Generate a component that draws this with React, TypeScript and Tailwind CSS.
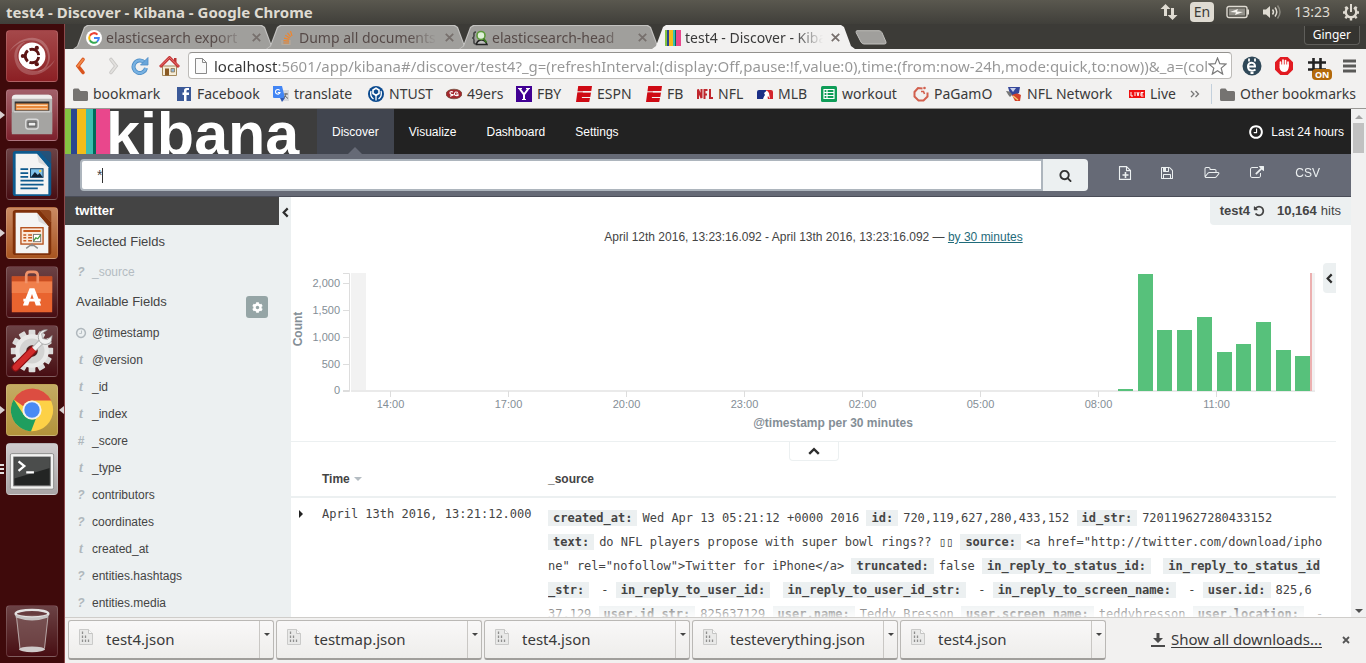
import React from "react";
import { FaCog } from "react-icons/fa";

const UI = "font-['Noto_Sans',sans-serif]";
const SANS = "font-['Liberation_Sans',sans-serif]";
const MONO = "font-['DejaVu_Sans_Mono',monospace]";

/* ---------- shared glyphs ---------- */

const PATHS = {
  search:
    "M1216 832q0-185-131.5-316.5t-316.5-131.5-316.5 131.5-131.5 316.5 131.5 316.5 316.5 131.5 316.5-131.5 131.5-316.5zm512 832q0 52-38 90t-90 38q-54 0-90-38l-343-342q-179 124-399 124-143 0-273.5-55.5t-225-150-150-225-55.5-273.5 55.5-273.5 150-225 225-150 273.5-55.5 273.5 55.5 225 150 150 225 55.5 273.5q0 220-124 399l343 343q37 37 37 90z",
  clock:
    "M1024 544v448q0 14-9 23t-23 9h-320q-14 0-23-9t-9-23v-64q0-14 9-23t23-9h224v-352q0-14 9-23t23-9h64q14 0 23 9t9 23zm416 352q0-148-73-273t-198-198-273-73-273 73-198 198-73 273 73 273 198 198 273 73 273-73 198-198 73-273zm224 0q0 209-103 385.5t-279.5 279.5-385.5 103-385.5-103-279.5-279.5-103-385.5 103-385.5 279.5-279.5 385.5-103 385.5 103 279.5 279.5 103 385.5z",
  undo: "M1664 896q0 156-61 298t-164 245-245 164-298 61q-172 0-327-72.5t-264-204.5q-7-10-6.5-22.5t8.5-20.5l137-138q10-9 25-9 16 2 23 12 73 95 179 147t225 52q104 0 198.5-40.5t163.5-109.5 109.5-163.5 40.5-198.5-40.5-198.5-109.5-163.5-163.5-109.5-198.5-40.5q-98 0-188 35.5t-160 101.5l137 138q31 30 14 69-17 40-59 40h-448q-26 0-45-19t-19-45v-448q0-42 40-59 39-17 69 14l130 129q107-101 244.5-156.5t284.5-55.5q156 0 298 61t245 164 164 245 61 298z",
  save: "M512 1536h768v-384h-768v384zm896 0h128v-896q0-14-10-38.5t-20-34.5l-281-281q-10-10-34-20t-39-10v416q0 40-28 68t-68 28h-576q-40 0-68-28t-28-68v-416h-128v1280h128v-416q0-40 28-68t68-28h832q40 0 68 28t28 68v416zm-384-928v-320q0-13-9.5-22.5t-22.5-9.5h-192q-13 0-22.5 9.5t-9.5 22.5v320q0 13 9.5 22.5t22.5 9.5h192q13 0 22.5-9.5t9.5-22.5zm640 32v928q0 40-28 68t-68 28h-1344q-40 0-68-28t-28-68v-1344q0-40 28-68t68-28h928q40 0 88 20t76 48l280 280q28 28 48 76t20 88z",
  folder:
    "M1845 931q0-35-53-35h-1088q-40 0-85.5 21.5t-71.5 52.5l-294 363q-18 24-18 40 0 35 53 35h1088q40 0 86-22t71-53l294-363q18-22 18-39zm-1141-163h768v-160q0-40-28-68t-68-28h-576q-40 0-68-28t-28-68v-64q0-40-28-68t-68-28h-320q-40 0-68 28t-28 68v853l256-315q44-53 116-87.5t140-34.5zm1269 163q0 62-46 120l-295 363q-43 53-116 87.5t-140 34.5h-1088q-92 0-158-66t-66-158v-960q0-92 66-158t158-66h320q92 0 158 66t66 158v32h544q92 0 158 66t66 158v160h192q54 0 99 24.5t67 70.5q15 32 15 68z",
  external:
    "M1408 928v320q0 119-84.5 203.5t-203.5 84.5h-832q-119 0-203.5-84.5t-84.5-203.5v-832q0-119 84.5-203.5t203.5-84.5h704q14 0 23 9t9 23v64q0 14-9 23t-23 9h-704q-66 0-113 47t-47 113v832q0 66 47 113t113 47h832q66 0 113-47t47-113v-320q0-14 9-23t23-9h64q14 0 23 9t9 23zm384-864v512q0 26-19 45t-45 19-45-19l-176-176-652 652q-10 10-23 10t-23-10l-114-114q-10-10-10-23t10-23l652-652-176-176q-19-19-19-45t19-45 45-19h512q26 0 45 19t19 45z",
};

function Glyph({ name, className = "w-3.5 h-3.5", box = "0 0 1792 1792" }: { name: keyof typeof PATHS; className?: string; box?: string }) {
  return (
    <svg viewBox={box} className={className} fill="currentColor" aria-hidden="true">
      <path d={PATHS[name]} />
    </svg>
  );
}

function Chevron({ className }: { className: string }) {
  return (
    <svg viewBox="0 0 12 12" className={className} fill="none" stroke="#2d2d2d" strokeWidth="2.4" aria-hidden="true">
      <path d="M8.4 1.5 4 6l4.4 4.5" />
    </svg>
  );
}

/* ---------- desktop panel ---------- */

function TopPanel() {
  return (
    <header className={`flex h-6 shrink-0 items-center justify-between bg-linear-to-b from-[#5a584f] to-[#403f3a] px-1.5 text-[#dfdbd2] ${UI}`}>
      <h1 className="text-[15px] leading-6 font-bold">test4 - Discover - Kibana - Google Chrome</h1>
      <div className="flex items-center gap-3">
        <svg viewBox="0 0 18 18" className="h-[18px] w-[18px]" fill="#dfdbd2">
          <path d="M5.500 1 10.500 6H7v7H4V6H.5zM12.500 17 7.500 12H11V5h3v7h3.500z" />
        </svg>
        <span className="rounded-sm bg-[#dfdbd2] px-1 text-sm leading-5 text-[#3c3b37]">En</span>
        <svg viewBox="0 0 24 14" className="h-3.5 w-6">
          <rect x="1" y="1.500" width="20" height="11" rx="2" fill="none" stroke="#dfdbd2" strokeWidth="1.400" />
          <rect x="3" y="3.500" width="16" height="7" fill="#918f88" />
          <path d="M22 4.500v5" stroke="#dfdbd2" strokeWidth="2" />
          <path d="m4 7 8-3-1 2.500 6 .5-8 3 1-2.500z" fill="#f5f3ee" />
        </svg>
        <svg viewBox="0 0 20 16" className="h-4 w-5" fill="none" stroke="#dfdbd2" strokeWidth="1.500">
          <path d="M1 5.500h3L8 2v12l-4-3.500H1z" fill="#dfdbd2" stroke="none" />
          <path d="M10.500 5.500q2 2.500 0 5M13 3.500q3.500 4.500 0 9" />
          <path d="M15.500 1.500q5 6.500 0 13" stroke="#8a887f" />
        </svg>
        <time className="text-sm">13:23</time>
        <svg viewBox="0 0 18 18" className="h-[18px] w-[18px]" fill="none" stroke="#dfdbd2">
          <path d="M6 4.600a5.300 5.300 0 1 0 6 0" strokeWidth="2.400" />
          <path d="M9 1v8" strokeWidth="2" />
          <path d="M1 9.500h2.500M14.500 9.500H17M3.300 3.800l1.800 1.800M14.700 3.800l-1.800 1.800M3.300 15.200l1.800-1.800M14.700 15.200l-1.800-1.800M9 15v2.500" strokeWidth="2.400" />
        </svg>
      </div>
    </header>
  );
}

/* ---------- launcher ---------- */

function Swirl() {
  return (
    <svg viewBox="0 0 52 52" className="h-full w-full">
      <path d="M2 22C14 2 40 2 44 22c3 12-5 20-12 20 14-4 14-22 2-30C26 8 14 8 2 22z" fill="#fff" opacity=".22" />
      <path d="M50 30C40 50 12 52 8 30 6 20 12 12 20 11 8 18 8 32 18 38c10 7 22 4 32-8z" fill="#fff" opacity=".2" />
      <circle cx="26" cy="26" r="14" fill="#fff" />
      <circle cx="26" cy="26" r="7" fill="none" stroke="#5c1414" strokeWidth="3" strokeDasharray="12.600 2" strokeDashoffset="-1" />
      <circle cx="16.500" cy="26" r="2.200" fill="#5c1414" />
      <circle cx="31" cy="17.600" r="2.200" fill="#5c1414" />
      <circle cx="31" cy="34.500" r="2.200" fill="#5c1414" />
    </svg>
  );
}

function Files() {
  return (
    <svg viewBox="0 0 52 52" className="h-full w-full">
      <path d="M5 9q0-4 4-4h34q4 0 4 4v35H5z" fill="#b9b8b6" />
      <path d="M5 9q0-4 4-4h34q4 0 4 4z" fill="#efeeed" />
      <path d="M8 12h36v10H8z" fill="#333" />
      <path d="M9 14h34v7H9z" fill="#e98a3c" />
      <path d="M10 16h32M10 19.500h32" stroke="#fbd9b4" strokeWidth="1.200" />
      <path d="M7 22h38l2 2v22H5V24z" fill="#a5a4a2" />
      <path d="M7 21.500h38v2H7z" fill="#cfcecd" />
      <rect x="19.500" y="30.500" width="13" height="10" rx="2.500" fill="#8d8c8b" stroke="#d9d9d9" strokeWidth="1.500" />
      <rect x="22" y="33.500" width="8" height="4" fill="#eee" stroke="#555" />
    </svg>
  );
}

function Doc({ tone, children }: { tone: string; children: React.ReactNode }) {
  return (
    <svg viewBox="0 0 52 52" className="h-full w-full">
      <path d="M6 5q0-3 3-3h25l12 13v31q0 3-3 3H9q-3 0-3-3z" fill={tone} />
      <path d="M34 2h9q3 0 3 3v10z" fill={tone} opacity=".75" />
      <path d="M9 5h22l12 14v28H9z" fill="#f4f4f3" />
      <path d="M31 5l12 14-10-5z" fill="#dcdcdc" />
      {children}
    </svg>
  );
}

function Bag() {
  return (
    <svg viewBox="0 0 52 52" className="h-full w-full">
      <path d="M5 10h42v37H5z" fill="#e9642f" />
      <path d="M5 10h42v5H5z" fill="#c94e22" />
      <path d="M5 15h42v12H5z" fill="#f07f4b" />
      <path d="M20 17V9q0-4 4-4h4q4 0 4 4v8" fill="none" stroke="#f0936a" strokeWidth="2.800" />
      <path d="M23.500 22h5l7 18h-5.500l-4-12-4 12h-5.500z" fill="#fff" />
      <path d="M17 33h18v3H17z" fill="#fff" />
    </svg>
  );
}

function Tools() {
  const teeth = [0, 30, 60, 90, 120, 150, 180, 210, 240, 270, 300, 330];
  return (
    <svg viewBox="0 0 52 52" className="h-full w-full">
      {teeth.map((a) => (
        <rect key={a} x="22.500" y="4" width="7" height="10" rx="1" fill="#dcdcdb" transform={`rotate(${a} 26 26)`} />
      ))}
      <circle cx="26" cy="26" r="17.500" fill="#e9e9e8" />
      <circle cx="26" cy="26" r="13" fill="#d3d3d2" />
      <circle cx="26" cy="26" r="6" fill="#4a2222" />
      <path d="M9 43 27 25" stroke="#8c0f12" strokeWidth="8.500" strokeLinecap="round" />
      <path d="M9 43 27 25" stroke="#d22b2b" strokeWidth="6" strokeLinecap="round" />
      <path d="m28 24 8-8" stroke="#b5b5b5" strokeWidth="6" />
      <path d="m28 24 8-8" stroke="#f1f1f0" strokeWidth="4" />
      <path d="M42 4c-6-1-11 4-9 10 2 6 9 7 13 2l1-6-5 4-5-1-1-5z" fill="#f1f1f0" stroke="#999" strokeWidth=".8" />
    </svg>
  );
}

function ChromeIcon() {
  return (
    <svg viewBox="0 0 52 52" className="h-full w-full">
      <circle cx="26" cy="26" r="22" fill="#fdd147" />
      <path d="M7 15A22 22 0 0 1 46 16H26a10 10 0 0 0-9 6z" fill="#dc4d41" />
      <path d="M7 15 17.300 31A10 10 0 0 0 30 35l-5 13A22 22 0 0 1 7 15z" fill="#1f9e5f" />
      <circle cx="26" cy="26" r="10" fill="#f4f3ee" />
      <circle cx="26" cy="26" r="8" fill="#4a8af4" />
    </svg>
  );
}

function TerminalIcon() {
  return (
    <svg viewBox="0 0 52 52" className="h-full w-full">
      <rect x="3.500" y="10" width="45" height="37" rx="1.500" fill="#f2f2f1" stroke="#8c8c8b" />
      <rect x="7" y="13.500" width="38" height="30" fill="#232524" stroke="#777" />
      <path d="M7.500 14h37v11L7.500 36z" fill="#4b4d4c" />
      <path d="m12 18 6 5-6 5" fill="none" stroke="#fff" strokeWidth="2.400" />
      <path d="M20 29.500h8" stroke="#fff" strokeWidth="2.200" />
    </svg>
  );
}

function Trash() {
  return (
    <svg viewBox="0 0 52 52" className="h-full w-full">
      <path d="m9 9 4 36q12 5 26 0l4-36z" fill="#8a6a6a" opacity=".5" />
      <path d="m10 12 3.500 32M42.500 12 39 44" stroke="#b9a9a9" fill="none" />
      <ellipse cx="26" cy="45" rx="13.500" ry="3" fill="#cfcaca" />
      <ellipse cx="26" cy="8" rx="17" ry="4" fill="none" stroke="#e4e2e2" strokeWidth="2.500" />
      <path d="M9 9q17 6 34 0v3q-17 6-34 0z" fill="#c6c2c2" />
    </svg>
  );
}

const LAUNCHERS: { label: string; bg: string; art: React.ReactNode; mark?: "one" | "many" | "active" }[] = [
  { label: "Dash home", bg: "bg-linear-to-b from-[#a5484a] to-[#8c1f24]", art: <Swirl /> },
  { label: "Files", bg: "bg-linear-to-b from-[#a2606a] to-[#7c1f2c]", art: <Files />, mark: "one" },
  {
    label: "Writer",
    bg: "bg-linear-to-b from-[#6b4245] to-[#480d13]",
    art: (
      <Doc tone="#0d5a8e">
        <path d="M14 21h8M14 25h8M14 29h8M14 33h24M14 37h24M14 41h18" stroke="#0d5a8e" strokeWidth="1.800" />
        <rect x="24.500" y="20.500" width="13" height="9" fill="#7fc1e8" stroke="#0d3d60" />
        <path d="m25 29 4-5 3 3 2-2 3 4z" fill="#123" />
        <circle cx="34.500" cy="23" r="1.300" fill="#f8d24a" />
      </Doc>
    ),
  },
  {
    label: "Impress",
    bg: "bg-linear-to-b from-[#c98a62] to-[#a8541f]",
    mark: "one",
    art: (
      <Doc tone="#80310a">
        <rect x="14.500" y="20.500" width="23" height="17" fill="#fbe9da" stroke="#b5501b" strokeWidth="1.400" />
        <path d="M17 24h18" stroke="#c55a1e" strokeWidth="2" />
        <path d="M17 28h3M17 31h3M17 34h3M22 28h4M22 31h4M22 34h4" stroke="#c55a1e" strokeWidth="1.600" />
        <rect x="27.500" y="27.500" width="7.500" height="7.500" fill="#fff" stroke="#777" />
        <path d="m28 34 2-3 2 1 3-4" fill="none" stroke="#3a9a3a" strokeWidth="1.300" />
        <path d="m20 42 4-3h4l4 3M26 37v2" fill="none" stroke="#888" strokeWidth="1.500" />
      </Doc>
    ),
  },
  { label: "Software Center", bg: "bg-linear-to-b from-[#6b4245] to-[#480d13]", art: <Bag /> },
  { label: "System Settings", bg: "bg-linear-to-b from-[#6b4245] to-[#480d13]", art: <Tools /> },
  { label: "Google Chrome", bg: "bg-linear-to-b from-[#c4ab63] to-[#b3933a]", art: <ChromeIcon />, mark: "active" },
  { label: "Terminal", bg: "bg-linear-to-b from-[#cfcccd] to-[#a9a5a6]", art: <TerminalIcon />, mark: "many" },
];

function Tile({ label, bg, art, mark }: { label: string; bg: string; art: React.ReactNode; mark?: string }) {
  return (
    <button type="button" aria-label={label} className="relative flex h-[52px] w-full shrink-0 items-center pl-1.5">
      <span className={`h-[52px] w-[52px] overflow-hidden rounded-[4px] border border-white/15 ${bg}`}>{art}</span>
      {(mark === "one" || mark === "active") && (
        <svg viewBox="0 0 5 8" className="absolute left-0 h-2 w-[5px]">
          <path d="M0 0 5 4 0 8z" fill="#d8d0d0" />
        </svg>
      )}
      {mark === "active" && (
        <svg viewBox="0 0 5 8" className="absolute right-0 h-2 w-[5px]">
          <path d="M5 0 0 4l5 4z" fill="#d8d0d0" />
        </svg>
      )}
      {mark === "many" && (
        <svg viewBox="0 0 5 12" className="absolute left-0 h-3 w-[5px]">
          <path d="M0 2h4M0 6h4M0 10h4" stroke="#e4dede" strokeWidth="2" />
        </svg>
      )}
    </button>
  );
}

function Launcher() {
  return (
    <nav aria-label="Launcher" className="flex w-[65px] shrink-0 flex-col justify-between border-r border-[#8d4a4c] bg-[#3f0a0b] pt-1.5 pb-1.5">
      <div className="flex flex-col gap-[7px]">
        {LAUNCHERS.map((l) => (
          <Tile key={l.label} {...l} />
        ))}
      </div>
      <Tile label="Trash" bg="bg-linear-to-b from-[#6b4245] to-[#480d13]" art={<Trash />} />
    </nav>
  );
}

/* ---------- browser chrome ---------- */

const SHAPE = "[clip-path:polygon(0_100%,4px_88%,11px_8%,14px_0,calc(100%-14px)_0,calc(100%-11px)_8%,calc(100%-4px)_88%,100%_100%)]";

function GoogleG() {
  return (
    <svg viewBox="0 0 16 16" className="h-4 w-4">
      <circle cx="8" cy="8" r="8" fill="#fff" />
      <path d="M11.500 4.600A4.800 4.800 0 0 0 3.800 5.700" fill="none" stroke="#ea4335" strokeWidth="2" />
      <path d="M3.800 5.700a4.800 4.800 0 0 0 0 4.600" fill="none" stroke="#fbbc05" strokeWidth="2" />
      <path d="M3.800 10.300a4.800 4.800 0 0 0 7.200 1.400" fill="none" stroke="#34a853" strokeWidth="2" />
      <path d="M11 11.700A4.800 4.800 0 0 0 12.800 8H8" fill="none" stroke="#4285f4" strokeWidth="2" />
    </svg>
  );
}

function StackIcon() {
  return (
    <svg viewBox="0 0 16 16" className="h-4 w-4" stroke="#f0852c" strokeWidth="1.200" fill="none">
      <path d="M3 10v4.500h8V10" stroke="#b5aa9c" />
      <path d="M4.500 13h5.500M4.500 10.600l5.500.5M5 8.100l5.200 1.300M6.300 5.300l4.500 2.600M8.500 2.800l3.200 4M11.500 1.200l1.500 5" />
    </svg>
  );
}

function HeadIcon() {
  return (
    <svg viewBox="0 0 16 16" className="h-4 w-4" fill="none">
      <path d="M4 2Q1.500 2 2 5 2.200 7.500.8 8 2.200 8.500 2 11q-.5 3 2 3" stroke="#444" strokeWidth="1.600" />
      <path d="M4.500 14.500Q5 10.500 9 10t6 4.500z" fill="#bdbdbd" stroke="#222" strokeWidth="1.500" />
      <circle cx="9" cy="5.500" r="4" fill="#dff0d8" stroke="#5c9a3a" strokeWidth="1.600" />
      <path d="m11.500 8.500 3 4" stroke="#3f7a24" strokeWidth="1.800" />
    </svg>
  );
}

function Stripes() {
  return (
    <svg viewBox="0 0 16 16" className="h-4 w-4">
      <path d="M0 0h2v16H0z" fill="#85c441" />
      <path d="M2 0h2v16H2z" fill="#2b4590" />
      <path d="M4 0h4v16H4z" fill="#f3bd19" />
      <path d="M8 0h2v16H8z" fill="#3cbeb1" />
      <path d="M10 0h1v16h-1z" fill="#006a5a" />
      <path d="M11 0h5v16h-5z" fill="#e9478c" />
    </svg>
  );
}

const TABS = [
  { title: "elasticsearch export", icon: <GoogleG /> },
  { title: "Dump all documents", icon: <StackIcon /> },
  { title: "elasticsearch-head", icon: <HeadIcon /> },
  { title: "test4 - Discover - Kibana", icon: <Stripes />, active: true },
];

function TabStrip() {
  return (
    <div className="flex h-[25px] shrink-0 items-end justify-between bg-[#3c3b37] pl-2">
      <div className="flex min-w-0 items-end" role="tablist">
        {TABS.map((t) => (
          <div key={t.title} className={`relative -mr-2.5 h-6 w-[203px] ${t.active ? "z-10" : ""}`}>
            <div className={`h-full px-px pt-px ${SHAPE} ${t.active ? "bg-[#f2f1f0]" : "bg-[#c3c2c0]"}`}>
              <div className={`flex h-full items-center pr-3.5 pl-3 ${SHAPE} ${t.active ? "bg-[#f2f1f0] text-[#3a3a3a]" : "bg-[#a09f9c] text-[#564a48]"}`}>
                <button type="button" role="tab" aria-selected={!!t.active} className="flex min-w-0 flex-1 items-center gap-1">
                  {t.icon}
                  <span className="min-w-0 flex-1 overflow-hidden text-left text-sm leading-5 whitespace-nowrap [mask-image:linear-gradient(to_right,#000_calc(100%-28px),transparent)]">{t.title}</span>
                </button>
                <button type="button" aria-label={`Close ${t.title}`} className="ml-2">
                  <svg viewBox="0 0 9 9" className="h-[9px] w-[9px]" stroke="#77706d" strokeWidth="1.800">
                    <path d="m.8.8 7.400 7.400M8.200.8.800 8.200" />
                  </svg>
                </button>
              </div>
            </div>
          </div>
        ))}
        <button type="button" aria-label="New tab" className="mb-1 ml-2.5">
          <svg viewBox="0 0 32 15" className="block h-[15px] w-8">
            <path d="M2 .7h22q2 0 3 2l4 9.300q.5 2-1.500 2H9q-2 0-3-2L1.200 2.700Q.7.7 2 .7z" fill="#a09f9c" stroke="#c0bfbc" />
          </svg>
        </button>
      </div>
      <button type="button" className="mr-1.5 mb-1 h-[19px] rounded-b border border-t-0 border-[#5f5e5a] bg-[#353430] px-2 text-xs text-white">Ginger</button>
    </div>
  );
}

function Toolbar() {
  return (
    <div className="flex h-[33px] shrink-0 items-center gap-2.5 bg-[#f2f1f0] pr-2.5 pl-2">
      <button type="button" aria-label="Back">
        <svg viewBox="0 0 14 20" className="h-5 w-3.5" fill="none">
          <path d="M10 3.500 5 10l5 6.500" stroke="#d9541e" strokeWidth="3.600" strokeLinecap="round" />
          <path d="M10 3.500 5 10" stroke="#f08a4a" strokeWidth="2" strokeLinecap="round" />
        </svg>
      </button>
      <button type="button" aria-label="Forward" className="ml-2.5">
        <svg viewBox="0 0 14 20" className="h-5 w-3.5" fill="none">
          <path d="M4 3.500 9 10l-5 6.500" stroke="#c9c7c5" strokeWidth="3.600" strokeLinecap="round" />
          <path d="M4 3.500 9 10l-5 6.500" stroke="#e2e0de" strokeWidth="1.800" strokeLinecap="round" />
        </svg>
      </button>
      <button type="button" aria-label="Reload">
        <svg viewBox="0 0 18 18" className="h-[18px] w-[18px]" fill="none">
          <path d="M13.500 5.500A6.300 6.300 0 1 0 15 11" stroke="#4f8ec6" strokeWidth="4" />
          <path d="M13.500 5.500A6.300 6.300 0 1 0 15 11" stroke="#79b2e2" strokeWidth="2.200" />
          <path d="M9.500 8H17V.500z" fill="#6aa6da" stroke="#4f8ec6" strokeWidth=".8" />
        </svg>
      </button>
      <button type="button" aria-label="Home">
        <svg viewBox="0 0 21 20" className="h-5 w-[21px]">
          <path d="M3.500 10h14v9.500h-14z" fill="#f4ecd8" stroke="#a58a5c" />
          <path d="M6 12.500h4v7H6z" fill="#8a5a24" />
          <path d="M12 12.500h3.500V16H12z" fill="#8fb6d8" stroke="#8a6a3a" strokeWidth=".7" />
          <path d="M15 2h2.500v5H15z" fill="#b33" />
          <path d="m1 11 9.500-9.500L20 11" fill="none" stroke="#c23434" strokeWidth="3" strokeLinejoin="round" />
          <path d="m1.500 10 9-8.500 9 8.500" fill="none" stroke="#e77" strokeWidth=".9" />
        </svg>
      </button>
      <div className="-ml-0.5 flex h-[27px] min-w-0 flex-1 items-center rounded-sm border border-[#bdbbb8] border-t-[#93918e] bg-white pr-1 pl-1.5">
        <svg viewBox="0 0 12 16" className="mr-[7px] h-4 w-3 shrink-0">
          <path d="M.5.5h7l4 4v11H.500z" fill="#fafafa" stroke="#8a8a8a" />
          <path d="M7.500.5v4h4" fill="none" stroke="#8a8a8a" />
        </svg>
        <input
          aria-label="Address"
          className="min-w-0 flex-1 bg-[linear-gradient(to_right,#333_63px,#969696_63px)] bg-clip-text text-[15px] leading-6 text-transparent outline-none"
          defaultValue="localhost:5601/app/kibana#/discover/test4?_g=(refreshInterval:(display:Off,pause:!f,value:0),time:(from:now-24h,mode:quick,to:now))&_a=(columns:!(_source))"
        />
        <button type="button" aria-label="Bookmark this page">
          <svg viewBox="0 0 19 18" className="h-[18px] w-[19px]" fill="#fff" stroke="#7a7a7a" strokeWidth="1.200">
            <path d="m9.500 1 2.300 5.700 6.100.4-4.700 4 1.500 6-5.200-3.300-5.200 3.300 1.500-6-4.700-4 6.100-.4z" />
          </svg>
        </button>
      </div>
      <div className="flex items-center gap-[13px]">
        <button type="button" aria-label="Evernote clipper">
          <svg viewBox="0 0 20 20" className="h-5 w-5">
            <circle cx="10" cy="10" r="9.500" fill="#2f4858" />
            <path d="M6.500 10.500H13A3.500 3.500 0 0 0 6 10q-.2 4.500 4 4.700 2 0 3.500-1.200" fill="none" stroke="#fff" strokeWidth="2" />
            <path d="M7 2.500v3M13 2.500v3M8.500 17h3" stroke="#fff" strokeWidth="1.800" />
          </svg>
        </button>
        <button type="button" aria-label="AdBlock">
          <svg viewBox="0 0 18 18" className="h-[18px] w-[18px]">
            <path d="M5.300 0h7.400L18 5.300v7.400L12.700 18H5.300L0 12.700V5.300z" fill="#e21b22" />
            <path d="M5.500 8V5M8 8V3M10.500 8V3.500M13 9V5" stroke="#fff" strokeWidth="1.700" strokeLinecap="round" />
            <path d="M4.700 7.500h9.100q.3 7.500-4.300 7.500-4.300 0-5-4.500z" fill="#fff" />
          </svg>
        </button>
        <button type="button" aria-label="Grid extension" className="relative flex h-6 w-6 items-start pt-1 pl-0.5">
          <svg viewBox="0 0 18 16" className="h-4 w-[18px]" stroke="#222" strokeWidth="2.600">
            <path d="M5.500 0v16M12.500 0v16M0 4.500h18M0 11.500h18" />
          </svg>
          <span className="absolute top-[15px] left-1.5 rounded-sm bg-[#b3690b] px-[3px] text-[9px] leading-[11px] font-bold text-white">ON</span>
        </button>
        <button type="button" aria-label="Menu">
          <svg viewBox="0 0 13 14" className="h-3.5 w-[13px]" stroke="#5a5a58" strokeWidth="2.800">
            <path d="M0 2h13M0 7h13M0 12h13" />
          </svg>
        </button>
      </div>
    </div>
  );
}

const folderIcon = (
  <svg viewBox="0 0 15 13" className="h-[13px] w-[15px]" fill="#757371">
    <path d="M0 2Q0 .5 1.500.5h4L7.500 3h6Q15 3 15 4.500v7q0 1.500-1.500 1.500h-12Q0 13 0 11.500z" />
  </svg>
);

function Icon16({ children }: { children: React.ReactNode }) {
  return (
    <svg viewBox="0 0 16 16" className="h-4 w-4">
      {children}
    </svg>
  );
}

const espn = (
  <Icon16>
    <path d="M2.200 0H16l-.7 5H7l-.2 1.500h8.200L14.300 11H6l-.2 1h8.200L13.200 16H0z" fill="#cf0a14" />
    <path d="M1 5.800h15" stroke="#f2f1f0" strokeWidth="1" />
  </Icon16>
);

const BOOKMARKS: { label: string; width: string; icon: React.ReactNode }[] = [
  { label: "bookmark", width: "w-[103px]", icon: folderIcon },
  {
    label: "Facebook",
    width: "w-[97px]",
    icon: (
      <Icon16>
        <path d="M1 1h14v14H1z" fill="#3b5998" />
        <path d="M10.500 15V9H13V6.500h-2.500V5q0-1 1-1H13V2h-2.500Q8 2 8 4.500v2H6.500V9H8v6z" fill="#fff" />
      </Icon16>
    ),
  },
  {
    label: "translate",
    width: "w-[95px]",
    icon: (
      <Icon16>
        <path d="M6 4h10v11H9z" fill="#d8dade" />
        <path d="M0 0h9l3 12H1Q0 12 0 11z" fill="#4285f4" />
        <path d="m7 12 5 0-3 4z" fill="#3058b0" />
        <path d="M6.700 4.500A2.300 2.300 0 1 0 7 6.500H4.800" fill="none" stroke="#fff" strokeWidth="1.100" />
        <path d="M11 8h4M13 7v1l-2 4M12 10l3 2.500" stroke="#666" fill="none" />
      </Icon16>
    ),
  },
  {
    label: "NTUST",
    width: "w-[78px]",
    icon: (
      <Icon16>
        <circle cx="8" cy="8" r="8" fill="#0b4a8f" />
        <path d="M8 2.200 11 4v3.500L8 9.300 5 7.500V4z" fill="none" stroke="#fff" strokeWidth="1.600" />
        <path d="M8 9v5.500M3 5q-1.500 5 2.500 8M13 5q1.500 5-2.500 8" fill="none" stroke="#fff" strokeWidth="1.300" />
      </Icon16>
    ),
  },
  {
    label: "49ers",
    width: "w-[70px]",
    icon: (
      <Icon16>
        <ellipse cx="8" cy="8" rx="8" ry="4.800" fill="#a3262c" stroke="#6b4a3a" strokeWidth=".7" />
        <path d="M7 6q-3-1-3 .7T6.500 8.500 4 10.200M12 6.500q-3-1.500-3.500 1t3.500 2V8h-2" fill="none" stroke="#fff" strokeWidth="1.100" />
      </Icon16>
    ),
  },
  {
    label: "FBY",
    width: "w-[60px]",
    icon: (
      <Icon16>
        <path d="M0 0h16v16H0z" fill="#410093" />
        <path d="m3.500 2.500 4.500 6 4.500-6M8 8v5.500" fill="none" stroke="#fff" strokeWidth="2" />
        <path d="M2 2.500h4M10 2.500h4M6 13.500h4" stroke="#fff" strokeWidth="1" />
      </Icon16>
    ),
  },
  { label: "ESPN", width: "w-[70px]", icon: espn },
  { label: "FB", width: "w-[51px]", icon: espn },
  {
    label: "NFL",
    width: "w-[60px]",
    icon: (
      <Icon16>
        <path d="M1 13V3.500L4.500 12V3M7.500 13V4h3M7.500 8.500H10M13 3v9h3" fill="none" stroke="#c0272d" strokeWidth="2" />
      </Icon16>
    ),
  },
  {
    label: "MLB",
    width: "w-[64px]",
    icon: (
      <Icon16>
        <path d="M2 4h7v9H0V6q0-2 2-2z" fill="#1b2f86" />
        <path d="M9 4h5q2 0 2 2v7h-5z" fill="#d2242c" />
        <path d="M6 13q1-3 2-4l-1-2 3-2.500L12 7l1 6-2-3-2 3z" fill="#fff" />
      </Icon16>
    ),
  },
  {
    label: "workout",
    width: "w-[92px]",
    icon: (
      <Icon16>
        <rect width="16" height="16" rx="1.500" fill="#0f9d58" />
        <path d="M3 3.500h10v9H3zM3 6.500h10M3 9.500h10M6 3.500v9" fill="none" stroke="#fff" strokeWidth="1.200" />
      </Icon16>
    ),
  },
  {
    label: "PaGamO",
    width: "w-[93px]",
    icon: (
      <Icon16>
        <path d="M9.500 2.500 5 2 1.500 6v4.500l4 4h5l4-4V6.500" fill="none" stroke="#d2604e" strokeWidth="2" />
        <circle cx="11.500" cy="2" r="1.300" fill="#d2604e" />
        <path d="M8 5.500h2.500l1 2.500" fill="none" stroke="#d2604e" strokeWidth="1.600" />
      </Icon16>
    ),
  },
  {
    label: "NFL Network",
    width: "w-[123px]",
    icon: (
      <Icon16>
        <path d="M2 1h12l-1 6-5 3-4-2z" fill="#36479a" />
        <path d="M4 2h6l-3 4z" fill="#c9d1ea" />
        <path d="M0 5q5 0 6 4l-2 2Q2 9 0 5z" fill="#777" />
        <path d="M6 9q5-3 9 0l-1 6H9z" fill="#d3422b" />
        <path d="m7 10 5 4" stroke="#f6c66a" strokeWidth="1.400" />
      </Icon16>
    ),
  },
  {
    label: "Live",
    width: "w-[61px]",
    icon: (
      <Icon16>
        <path d="M0 4h16v8H0z" fill="#f01010" />
        <path d="M2 6v4h2M6 6v4M8 6l1 4 1-4M14.500 6.500H12V10h2.500M12 8h2" fill="none" stroke="#fff" strokeWidth="1" />
      </Icon16>
    ),
  },
];

function BookmarkBar() {
  return (
    <div className="flex h-[27px] shrink-0 items-center border-b border-[#9a9895] bg-[#f2f1f0] pb-0.5 pl-2 text-sm text-[#3a3a3a]">
      <ul className="flex min-w-0 flex-1 items-center overflow-hidden">
        {BOOKMARKS.map((b) => (
          <li key={b.label} className={`shrink-0 ${b.width}`}>
            <a href="#" className="flex items-center gap-[5px] whitespace-nowrap">
              {b.icon}
              {b.label}
            </a>
          </li>
        ))}
        <li>
          <button type="button" aria-label="More bookmarks" className="flex">
            <svg viewBox="0 0 10 8" className="h-2 w-2.5" fill="none" stroke="#777" strokeWidth="1.300">
              <path d="m1 1 3 3-3 3M5.500 1l3 3-3 3" />
            </svg>
          </button>
        </li>
      </ul>
      <a href="#" className="flex items-center gap-[5px] border-l border-[#c3d0dc] pr-2.5 pl-2 whitespace-nowrap">
        {folderIcon}
        Other bookmarks
      </a>
    </div>
  );
}

/* ---------- kibana ---------- */

function KibanaNav() {
  return (
    <nav className="flex h-[45px] items-stretch justify-between bg-[#222] text-xs text-white">
      <div className="flex items-stretch">
        <a href="#" className="flex w-[252px] items-stretch overflow-hidden bg-[#3d3d3d]">
          <span className="w-1.5 bg-[#85c441]" />
          <span className="w-1.5 bg-[#2b4590]" />
          <span className="w-[9px] bg-[#f3bd19]" />
          <span className="w-[7px] bg-[#3cbeb1]" />
          <span className="w-[3px] bg-[#006a5a]" />
          <span className="w-3.5 bg-[#e9478c]" />
          <span className="-ml-1 h-[45px] flex-1 text-[61px] leading-[50px] font-bold">kibana</span>
        </a>
        <a href="#" className="relative flex items-center bg-[#41454f] px-[15px]">
          Discover
          <svg viewBox="0 0 14 7" className="absolute bottom-0 left-1/2 -ml-[7px] h-[7px] w-3.5">
            <path d="m0 7 7-7 7 7z" fill="#666a76" />
          </svg>
        </a>
        <a href="#" className="flex items-center px-[15px]">Visualize</a>
        <a href="#" className="flex items-center px-[15px]">Dashboard</a>
        <a href="#" className="flex items-center px-[15px]">Settings</a>
      </div>
      <button type="button" className="flex items-center gap-[7px] pr-[7px]">
        <Glyph name="clock" className="h-4 w-4" />
        Last 24 hours
      </button>
    </nav>
  );
}

function SearchBar() {
  return (
    <form className="flex h-[43px] items-center border-b border-[#4a4d58] bg-[#666a76] py-1 pr-[31px] pl-[15px]" onSubmit={(e) => e.preventDefault()}>
      <div className="flex h-8 min-w-0 flex-1">
        <input
          aria-label="Query"
          defaultValue="*"
          autoFocus
          className="min-w-0 flex-1 rounded-l border-2 border-[#adb5bd] bg-white bg-[linear-gradient(#333,#333)] bg-[length:1px_15px] bg-[position:20px_center] bg-no-repeat px-[15px] text-sm text-[#444] caret-transparent outline-none"
        />
        <button type="submit" aria-label="Search" className="flex w-[45px] items-center justify-center rounded-r bg-[#ecf0f1] text-[#333]">
          <Glyph name="search" className="h-[13px] w-[13px]" />
        </button>
      </div>
      <div className="flex items-center pb-1 text-[#ecf0f1]">
        <button type="button" aria-label="New search" className="ml-[30px]">
          <svg viewBox="0 0 14 14" className="h-3.5 w-3.5" fill="none" stroke="currentColor" strokeWidth="1.100">
            <path d="M1.500.6h7l4 4v8.800h-11zM8.500.6v4h4" />
            <path d="M7.500 6v6M4.500 9h6" strokeWidth="1.600" />
          </svg>
        </button>
        <button type="button" aria-label="Save search" className="ml-7">
          <Glyph name="save" />
        </button>
        <button type="button" aria-label="Load saved search" className="ml-[30px]">
          <Glyph name="folder" className="h-3.5 w-4" box="0 0 2048 1792" />
        </button>
        <button type="button" aria-label="Share" className="ml-[30px]">
          <Glyph name="external" />
        </button>
        <button type="button" className="ml-[31px] text-xs">CSV</button>
      </div>
    </form>
  );
}

const FIELDS: [string, string][] = [
  ["clock", "@timestamp"],
  ["t", "@version"],
  ["t", "_id"],
  ["t", "_index"],
  ["#", "_score"],
  ["t", "_type"],
  ["?", "contributors"],
  ["?", "coordinates"],
  ["t", "created_at"],
  ["?", "entities.hashtags"],
  ["?", "entities.media"],
];

function Field({ kind, name, muted }: { kind: string; name: string; muted?: boolean }) {
  return (
    <li className={`flex h-[27px] items-center gap-1.5 text-xs ${muted ? "text-[#b4bcc2]" : "text-[#444]"}`}>
      <span className="flex w-2.5 items-center justify-center font-bold text-[#b0b8bd]">
        {kind === "clock" ? <Glyph name="clock" className="h-3 w-3 shrink-0" /> : <span className={kind === "t" ? "font-['Liberation_Serif',serif] text-sm italic" : kind === "?" ? "italic" : ""}>{kind}</span>}
      </span>
      {name}
    </li>
  );
}

function Sidebar() {
  return (
    <aside className="flex w-[226px] shrink-0 items-start bg-[#ecf0f1] text-[#444]">
      <div className="min-w-0 flex-1">
        <h2 className="flex h-7 items-center bg-[#444] pl-2.5 text-[13px] font-bold text-white">twitter</h2>
        <div className="pl-[11px]">
          <h3 className="flex h-[33px] items-center text-[13px]">Selected Fields</h3>
          <ul>
            <Field kind="?" name="_source" muted />
          </ul>
          <div className="flex h-[34px] items-center justify-between pr-[11px]">
            <h3 className="text-[13px]">Available Fields</h3>
            <button type="button" aria-label="Field settings" className="mt-2.5 flex h-[22px] w-[22px] items-center justify-center rounded-[3px] bg-[#95a5a6] text-white">
              <FaCog className="h-[11px] w-[11px]" />
            </button>
          </div>
          <ul>
            {FIELDS.map(([k, n]) => (
              <Field key={n} kind={k} name={n} />
            ))}
          </ul>
        </div>
      </div>
      <button type="button" aria-label="Collapse fields" className="flex h-7 w-3 items-center justify-center pt-0.5">
        <Chevron className="h-[11px] w-[11px]" />
      </button>
    </aside>
  );
}

const BARS: [number, number][] = [
  [827, 126], [847, 11], [866, 67], [886, 67], [906, 54], [926, 89], [945, 81], [965, 59], [985, 87], [1004, 93],
];
const Y_TICKS: [number, string][] = [[20, "2,000"], [47, "1,500"], [74, "1,000"], [101, "500"], [127, "0"]];
const X_TICKS = ["14:00", "17:00", "20:00", "23:00", "02:00", "05:00", "08:00", "11:00"];

function Histogram() {
  return (
    <svg viewBox="0 0 1045 178" className="block w-full" fontSize="11" fill="#848e96" role="img" aria-label="Count per 30 minutes">
      <rect x="60" y="10" width="15" height="118" fill="#f2f2f2" />
      <rect x="1021" y="10" width="3" height="118" fill="#f2f2f2" />
      <rect x="60" y="127" width="964" height="2" fill="#eaeaea" />
      <path d="M52 10.500h6.500v118H52" fill="none" stroke="#ddd" />
      {Y_TICKS.map(([y, label]) => (
        <g key={label}>
          <path d={`M52 ${y + 0.5}h6`} stroke="#ddd" />
          <text x="49" y={y + 4} textAnchor="end">{label}</text>
        </g>
      ))}
      {X_TICKS.map((label, i) => (
        <g key={label}>
          <path d={`M${99.5 + i * 118} 128v6`} stroke="#ddd" />
          <text x={99.5 + i * 118} y="145" textAnchor="middle">{label}</text>
        </g>
      ))}
      {BARS.map(([x, y]) => (
        <rect key={x} x={x} y={y} width="15" height={128 - y} fill="#57c17b" />
      ))}
      <rect x="1019" y="10" width="2" height="118" fill="#ecb0b0" />
      <text x="542" y="164" textAnchor="middle" fontSize="12" fontWeight="bold">@timestamp per 30 minutes</text>
      <text transform="translate(11 66) rotate(-90)" textAnchor="middle" fontSize="12" fontWeight="bold">Count</text>
    </svg>
  );
}

const NB = "\u00a0";
const SOURCE: { key?: string; value?: string; br?: boolean; open?: boolean }[] = [
  { key: "created_at:", value: "Wed Apr 13 05:21:12 +0000 2016" },
  { key: "id:", value: "720,119,627,280,433,152" },
  { key: "id_str:", value: "720119627280433152", br: true },
  { key: "text:", value: "do NFL players propose with super bowl rings?? \u25af\u25af" },
  { key: "source:", value: '<a href="http://twitter.com/download/ipho', br: true },
  { value: 'ne" rel="nofollow">Twitter for iPhone</a>' },
  { key: "truncated:", value: "false" },
  { key: "in_reply_to_status_id:", value: "" },
  { key: "in_reply_to_status_id", br: true, open: true },
  { key: "_str:", value: NB + "-" },
  { key: "in_reply_to_user_id:", value: "" },
  { key: "in_reply_to_user_id_str:", value: NB + "-" },
  { key: "in_reply_to_screen_name:", value: NB + "-" },
  { key: "user.id:", value: "825,6", br: true },
  { value: "37,129" },
  { key: "user.id_str:", value: "825637129" },
  { key: "user.name:", value: "Teddy Bresson" },
  { key: "user.screen_name:", value: "teddybresson" },
  { key: "user.location:", value: NB + "-" },
];

function Documents() {
  return (
    <table className="w-full table-fixed text-left text-xs text-[#444]">
      <thead>
        <tr className="h-9 border-b-2 border-[#ecf0f1]">
          <th className="w-[23px]" />
          <th className="w-[226px] pl-2 font-bold">
            Time
            <svg viewBox="0 0 8 4" className="ml-1 inline-block h-1 w-2" fill="#b4bcc2">
              <path d="M0 0h8L4 4z" />
            </svg>
          </th>
          <th className="pl-2 font-bold">_source</th>
        </tr>
      </thead>
      <tbody className={MONO}>
        <tr className="align-top">
          <td className="pt-3 pl-2">
            <button type="button" aria-label="Expand row" className="block">
              <svg viewBox="0 0 4 8" className="h-2 w-1" fill="#222">
                <path d="m0 0 4 4-4 4z" />
              </svg>
            </button>
          </td>
          <td className="pt-2 pl-2 leading-4 whitespace-nowrap">April 13th 2016, 13:21:12.000</td>
          <td className="pt-2 pl-2">
            <div className="relative max-h-[115px] overflow-hidden leading-6">
              {SOURCE.map((s, i) => (
                <React.Fragment key={i}>
                  {s.key && (
                    <b className={`bg-[#ecf0f1] py-px ${s.open ? "pl-[5px]" : s.key === "_str:" ? "mr-[5px] pr-[5px]" : "mr-[5px] px-[5px]"}`}>{s.key}</b>
                  )}
                  {s.value}
                  {s.br ? <br /> : " "}
                </React.Fragment>
              ))}
              <div className="absolute inset-x-0 bottom-0 h-5 bg-linear-to-b from-white/0 to-white" />
            </div>
          </td>
        </tr>
      </tbody>
    </table>
  );
}

function Discover() {
  return (
    <main className="min-w-0 flex-1 bg-white">
      <div className="flex justify-end">
        <div className="flex h-7 items-center rounded-bl bg-[#ecf0f1] px-2.5 text-[13px] text-[#444]">
          <b>test4</b>
          <button type="button" aria-label="Reload saved search" className="ml-[3px]">
            <Glyph name="undo" className="h-3 w-3" />
          </button>
          <b className="ml-3">10,164</b>
          <span className="ml-1">hits</span>
        </div>
      </div>
      <div className="mr-[15px]">
        <p className="h-6 text-center text-xs leading-6 text-[#444]">
          April 12th 2016, 13:23:16.092 - April 13th 2016, 13:23:16.092 —{" "}
          <a href="#" className="text-[#1f6b7a] underline">by 30 minutes</a>
        </p>
        <div className="relative pt-3.5">
          <Histogram />
          <button type="button" aria-label="Show legend" className="absolute top-3.5 right-0 flex h-[30px] w-[13px] items-center justify-center rounded-l-sm bg-[#ecf0f1]">
            <Chevron className="h-[11px] w-[11px]" />
          </button>
        </div>
        <div className="flex justify-center border-t border-[#ecf0f1]">
          <button type="button" aria-label="Hide chart" className="flex h-[19px] w-[50px] items-center justify-center rounded-b border border-t-0 border-[#ecf0f1]">
            <svg viewBox="0 0 12 8" className="h-2 w-3" fill="none" stroke="#2d2d2d" strokeWidth="2.400">
              <path d="m1.200 6.800 4.800-4.600 4.800 4.600" />
            </svg>
          </button>
        </div>
        <Documents />
      </div>
    </main>
  );
}

function Scrollbar() {
  return (
    <div className="flex w-[15px] shrink-0 flex-col items-center bg-[#f1f1f1] pt-1.5 pb-1" aria-hidden="true">
      <svg viewBox="0 0 8 4" className="h-1 w-2" fill="#a3a3a3">
        <path d="m0 4 4-4 4 4z" />
      </svg>
      <div className="mt-1 h-[30px] w-[11px] bg-[#c1c1c1]" />
      <svg viewBox="0 0 8 4" className="mt-auto h-1 w-2" fill="#505050">
        <path d="m0 0 4 4 4-4z" />
      </svg>
    </div>
  );
}

/* ---------- downloads ---------- */

const FILES = ["test4.json", "testmap.json", "test4.json", "testeverything.json", "test4.json"];

function Downloads() {
  return (
    <footer className="flex h-[46px] shrink-0 items-center justify-between border-t border-[#cfcdca] bg-[#f2f1f0] pr-4 pb-0.5 pl-[3px] text-[15px] text-[#3a3a3a]">
      <div className="flex gap-0.5">
        {FILES.map((f, i) => (
          <div key={i} className="flex h-10 w-[206px] rounded-[3px] border border-b-2 border-[#bab8b5] border-b-[#a09e9b] bg-linear-to-b from-[#f9f8f8] to-[#eeedeb]">
            <button type="button" className="flex flex-1 items-center gap-[13px] pl-2.5">
              <svg viewBox="0 0 14 16" className="mb-1 h-4 w-3.5">
                <path d="M.5.500h9l4 4v11H.500z" fill="#e9e9e8" stroke="#cacac9" />
                <path d="M9.500.5v4h4" fill="#f8f8f8" stroke="#c4c4c3" />
                <path d="M3.500 2.500v2.500M3.500 6.500V9M6.500 6.500V9M3.500 10.500V13M6.500 10.500V13M9.500 10.500V13" fill="none" stroke="#8f8f8e" strokeWidth="1.300" />
              </svg>
              {f}
            </button>
            <button type="button" aria-label={`Options for ${f}`} className="flex w-3.5 justify-center border-l border-[#c9c7c4] pt-3">
              <svg viewBox="0 0 6 3" className="h-[3px] w-1.5" fill="#444">
                <path d="M0 0h6L3 3z" />
              </svg>
            </button>
          </div>
        ))}
      </div>
      <div className="flex items-center">
        <svg viewBox="0 0 14 14" className="mr-1.5 h-3.5 w-3.5" fill="#4a4a4a">
          <path d="M5.500 0h3v5H12L7 10 2 5h3.500zM0 12h14v2H0z" />
        </svg>
        <a href="#" className="underline underline-offset-2">Show all downloads...</a>
        <button type="button" aria-label="Close downloads bar" className="ml-5">
          <svg viewBox="0 0 8 8" className="h-2 w-2" stroke="#555" strokeWidth="1.800">
            <path d="m1 1 6 6M7 1 1 7" />
          </svg>
        </button>
      </div>
    </footer>
  );
}

export default function App() {
  return (
    <div className="flex h-screen flex-col overflow-hidden">
      <TopPanel />
      <div className="flex min-h-0 flex-1">
        <Launcher />
        <div className={`flex min-w-0 flex-1 flex-col ${UI}`}>
          <TabStrip />
          <Toolbar />
          <BookmarkBar />
          <div className={`flex min-h-0 flex-1 ${SANS}`}>
            <div className="flex min-w-0 flex-1 flex-col overflow-hidden">
              <div className="shrink-0">
                <KibanaNav />
                <SearchBar />
              </div>
              <div className="flex min-h-0 flex-1 overflow-hidden">
                <Sidebar />
                <Discover />
              </div>
            </div>
            <Scrollbar />
          </div>
          <Downloads />
        </div>
      </div>
    </div>
  );
}
